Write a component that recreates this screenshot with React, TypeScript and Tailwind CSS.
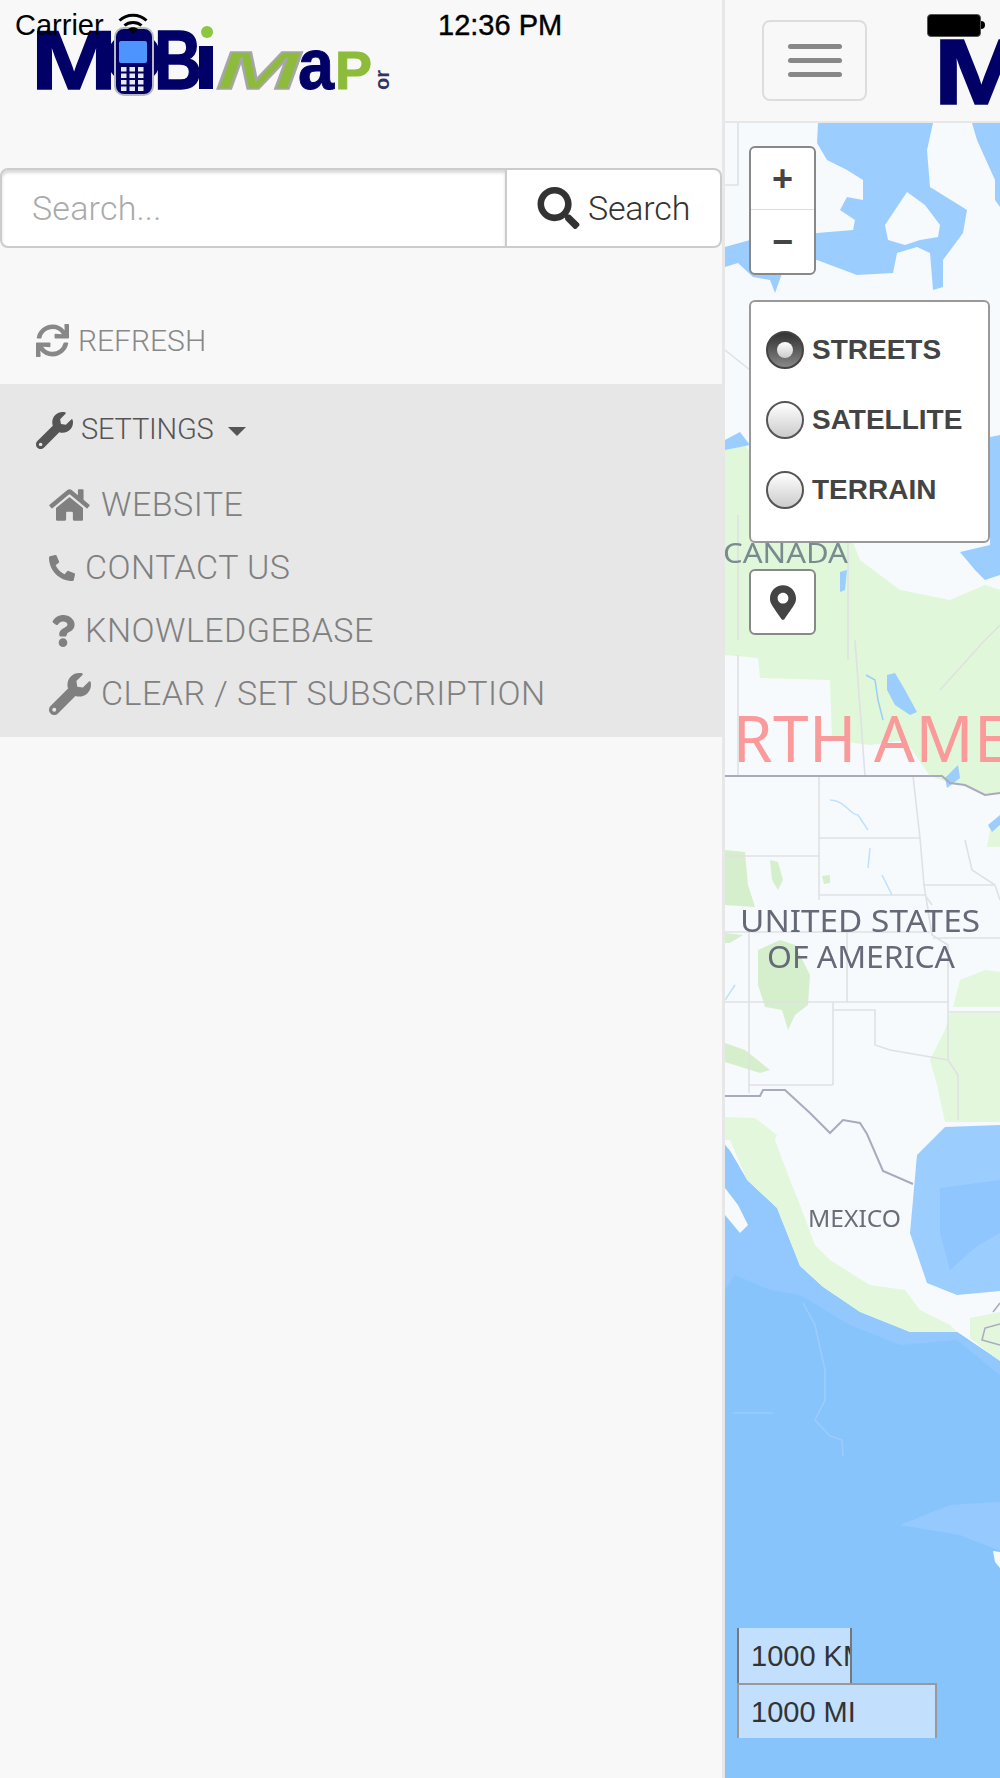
import { FaHome, FaMapMarkerAlt, FaPhoneAlt, FaQuestion, FaSearch, FaSync, FaWrench } from "react-icons/fa";

function Logo({ className }: { className: string }) {
    return (
        <svg viewBox="0 0 358 68" className={`overflow-visible ${className}`} style={{ fontFamily: "'Liberation Sans', sans-serif" }}>
            <text x="-5" y="61" fontSize="84" fontWeight="700" fill="#000066" stroke="#000066" strokeWidth="1.5" textLength="86" lengthAdjust="spacingAndGlyphs">M</text>
            <circle cx="98" cy="30" r="27" fill="#000066" />
            <rect x="79" y="0" width="38" height="67" rx="9" fill="#000066" stroke="#b9b9c4" strokeWidth="2" />
            <rect x="83" y="13" width="28" height="22" rx="2" fill="#4d94ff" />
            {[0, 1, 2, 3].map((row) =>
                [0, 1, 2].map((col) => (
                    <rect key={`${row}-${col}`} x={85 + col * 8.5} y={39 + row * 6.5} width="5.5" height="4.5" fill="#e8e8ef" />
                ))
            )}
            <text x="118" y="61" fontSize="84" fontWeight="700" fill="#000066" stroke="#000066" strokeWidth="1.5" textLength="48" lengthAdjust="spacingAndGlyphs">B</text>
            <rect x="163" y="18" width="14" height="43" fill="#000066" />
            <circle cx="171" cy="4" r="6" fill="#8dc63f" />
            <text x="180" y="61" fontSize="54" fontWeight="700" fontStyle="italic" fill="#8dbb3a" stroke="#a6a6a6" strokeWidth="1.5" textLength="84" lengthAdjust="spacingAndGlyphs">M</text>
            <text x="262" y="61" fontSize="72" fontWeight="700" fill="#000066" stroke="#000066" strokeWidth="1" textLength="36" lengthAdjust="spacingAndGlyphs">a</text>
            <text x="299" y="61" fontSize="54" fontWeight="700" fill="#8dbb3a" stroke="#8dbb3a" strokeWidth="1" textLength="37" lengthAdjust="spacingAndGlyphs">P</text>
            <text x="0" y="0" fontSize="20" fontWeight="700" fill="#333366" transform="translate(353 62) rotate(-90)">or</text>
        </svg>
    );
}

function StatusBar() {
    return (
        <div className="absolute top-0 left-0 w-full h-[52px] flex items-center justify-between pl-[15px] pr-[15px] text-[29px] text-black font-['Liberation_Sans',sans-serif]">
            <div className="flex items-center gap-[14px]">
                <span>Carrier</span>
                <svg viewBox="0 0 30 22" className="w-[30px] h-[22px] -mt-[5px]" fill="none" stroke="#000" strokeWidth="3">
                    <path d="M1.5 7.5 C9 0.5 21 0.5 28.5 7.5" />
                    <path d="M6.5 12.5 C11 8.5 19 8.5 23.5 12.5" />
                    <path d="M15 21 L10 16 C13 13.5 17 13.5 20 16 Z" fill="#000" stroke="none" />
                </svg>
            </div>
            <span className="absolute left-[438px] [-webkit-text-stroke:0.4px_#000]">12:36 PM</span>
            <div className="flex items-center -mt-[2px]">
                <div className="w-[54px] h-[23px] bg-black rounded-[4px] border border-[#555]" />
                <div className="w-[4px] h-[8px] bg-black rounded-r-full" />
            </div>
        </div>
    );
}

function Sidebar() {
    const rows = [
        { label: "WEBSITE", icon: <FaHome className="w-[41px] h-[36px]" />, iconBox: "w-[52px] pl-0" },
        { label: "CONTACT US", icon: <FaPhoneAlt className="w-[26px] h-[26px]" />, iconBox: "w-[36px] pl-0" },
        { label: "KNOWLEDGEBASE", icon: <FaQuestion className="w-[24px] h-[32px]" />, iconBox: "w-[36px] pl-[2px]" },
        { label: "CLEAR / SET SUBSCRIPTION", icon: <FaWrench className="w-[42px] h-[42px]" />, iconBox: "w-[52px] pl-0" },
    ];

    return (
        <aside className="w-[725px] shrink-0 h-full bg-[#f8f8f8] border-r-[3px] border-[#e7e7e7]">
            <div className="pt-[28px] pl-[36px] h-[168px]">
                <Logo className="w-[358px] h-[68px]" />
            </div>

            <div className="flex h-[80px] w-[722px] text-[34px] font-light">
                <div className="w-[507px] bg-white border-2 border-[#ccc] rounded-l-[8px] shadow-[inset_0_3px_3px_rgba(0,0,0,0.15)] flex items-center pl-[30px] text-[#aaa] tracking-[0.2px]">
                    Search...
                </div>
                <div className="flex-1 bg-white border-2 border-l-0 border-[#ccc] rounded-r-[8px] flex items-center pl-[30px] gap-[8px] text-[#333] tracking-[-0.2px]">
                    <FaSearch className="w-[43px] h-[42px]" />
                    Search
                </div>
            </div>

            <div className="h-[136px] flex items-start pt-[75px] pl-[36px] text-[#888]">
                <FaSync className="w-[33px] h-[33px] mt-[1px]" />
                <span className="ml-[9px] text-[30px] leading-[35px] font-light">REFRESH</span>
            </div>

            <div className="bg-[#e7e7e7] h-[353px] pt-[23px]">
                <div className="flex items-center h-[46px] pl-[36px] text-[#555]">
                    <FaWrench className="w-[37px] h-[37px]" />
                    <span className="ml-[8px] text-[29px] font-light tracking-[-0.2px]">SETTINGS</span>
                    <span className="ml-[14px] mt-[3px] w-0 h-0 border-x-[9px] border-x-transparent border-t-[9px] border-t-[#555]" />
                </div>
                <div className="mt-[20px] pl-[49px] text-[#808080]">
                    {rows.map((row) => (
                        <div key={row.label} className="flex items-center h-[63px] text-[34px] font-light tracking-[0.45px]">
                            <span className={`${row.iconBox} shrink-0 flex items-center`}>{row.icon}</span>
                            {row.label}
                        </div>
                    ))}
                </div>
            </div>
        </aside>
    );
}

function MapArt() {
    return (
        <svg viewBox="725 123 275 1655" className="block w-full h-full blur-[0.7px]" style={{ fontFamily: "'Noto Sans', sans-serif" }}>
            <rect x="725" y="123" width="275" height="1655" fill="#f6fafd" />

            {/* green land */}
            <path fill="#e0f7d9" d="M725 447 L745 445 L770 480 L800 520 L850 535 L860 560 L900 590 L950 600 L985 585 L1000 590 L1000 793 L985 795 L965 785 L950 783 L930 776 L725 776 Z" />
            <path fill="#f6fafd" d="M725 655 L758 658 L760 678 L830 680 L832 740 L870 745 L905 740 L930 776 L725 776 Z" />
            <g fill="#e3f7dd">
                <path d="M987 847 L990 830 L1000 827 L1000 847 Z" />
                <path d="M953 1007 L960 980 L985 970 L1000 972 L1000 1007 Z" />
                <path d="M930 1060 L945 1030 L950 1013 L1000 1013 L1000 1122 L945 1122 L937 1085 Z" />
                <path d="M725 1117 L755 1118 L777 1135 L775 1140 L725 1140 Z" />
            </g>
            <g fill="#d5efcd">
                <path d="M725 850 L745 852 L748 885 L755 907 L725 905 Z" />
                <path d="M770 860 L778 862 L783 880 L778 890 L772 880 Z" />
                <path d="M822 876 L830 875 L830 883 L824 884 Z" />
                <path d="M725 933 L743 935 L730 943 L725 943 Z" />
                <path d="M758 950 L780 940 L795 945 L810 975 L808 1005 L795 1015 L788 1030 L782 1010 L765 1007 L758 985 Z" />
                <path d="M725 1043 L745 1050 L770 1070 L760 1073 L725 1062 Z" />
            </g>

            {/* water, north */}
            <g fill="#9ccdff">
                <path d="M818 123 L817 143 L827 160 L847 170 L863 180 L863 200 L847 197 L840 210 L855 220 L853 230 L817 233 L750 240 L725 247 L725 267 L738 263 L753 277 L770 280 L775 293 L785 265 L817 260 L857 275 L893 273 L897 253 L917 247 L930 253 L933 290 L943 287 L943 260 L963 233 L967 210 L930 187 L927 150 L933 123 Z" />
                <path d="M972 123 L977 140 L995 180 L995 200 L1000 207 L1000 123 Z" />
                <path d="M990 437 L1000 435 L1000 575 L985 580 L975 570 L960 552 L990 545 Z" />
                <path d="M887 675 L895 673 L905 690 L917 712 L910 715 L895 705 L887 690 Z" />
                <path d="M840 572 L847 570 L845 590 L840 592 Z" />
                <path d="M725 440 L740 432 L750 445 L725 450 Z" />
                <path d="M945 778 L958 765 L960 778 L947 788 Z" />
                <path d="M988 825 L1000 815 L1000 825 L992 832 Z" />
            </g>
            <path fill="#f6fafd" d="M885 225 L907 192 L925 205 L940 225 L938 237 L920 240 L905 245 L888 240 Z" />

            {/* gulf and pacific */}
            <path fill="#9ccdff" d="M945 1127 L1000 1125 L1000 1291 L957 1295 L927 1283 L910 1233 L917 1155 Z" />
            <path fill="#8ec6fd" d="M940 1188 L1000 1180 L1000 1233 L977 1246 L950 1270 L940 1233 Z" />
            <path fill="#88c4fc" d="M725 1778 L725 1145 L730 1151 L747 1180 L777 1208 L800 1266 L823 1287 L860 1312 L910 1332 L957 1332 L1000 1361 L1000 1778 Z" />
            <path fill="#92c8fe" d="M725 1145 L730 1151 L747 1180 L777 1208 L800 1266 L823 1287 L860 1312 L910 1332 L957 1332 L1000 1361 L1000 1375 L957 1340 L900 1345 L850 1325 L800 1295 L770 1290 L735 1275 L725 1290 Z" />
            <path fill="#96caff" d="M900 1525 L950 1505 L1000 1502 L1000 1551 L960 1535 Z" />
            <path fill="#f6fafd" d="M725 1188 L738 1205 L748 1225 L740 1233 L725 1215 Z M993 1551 L1000 1552 L1000 1568 L995 1562 Z" />

            {/* mexico */}
            <path fill="#e3f7dd" d="M730 1140 L775 1140 L790 1180 L800 1205 L815 1245 L830 1260 L870 1285 L905 1290 L920 1310 L950 1325 L957 1332 L910 1332 L860 1312 L823 1287 L800 1266 L777 1208 L747 1180 Z" />
            <path fill="#e3f7dd" d="M970 1318 L1000 1312 L1000 1361 L985 1350 L970 1338 Z" />

            {/* state lines */}
            <g fill="none" stroke="#dfe1e3" strokeWidth="1.6">
                <path d="M819 776 V900 M819 838 H920 M913 776 L920 838 L924 885 L932 935 L948 945 V1060 M819 895 H925 L932 905" />
                <path d="M725 856 H819 M725 932 H930 M749 932 V1093 M847 932 V1002 M725 1002 H948 M833 1002 V1085 M749 1085 H833" />
                <path d="M923 885 H995 M933 938 H1000 M833 1010 H875 V1045 L890 1050 L948 1060 L958 1075 V1120 M948 1012 H1000" />
                <path d="M995 885 L1000 900 M965 840 L972 870 L995 885" />
                <path d="M738 123 V185 H725 M738 655 V776 M855 640 L865 776 M940 690 L985 640 L1000 625" />
                <path d="M738 515 V640 M848 540 V660" />
                <path d="M725 350 L750 370" />
            </g>

            {/* borders */}
            <g fill="none" stroke="#aaaabc" strokeWidth="2">
                <path d="M725 776 H942 L950 783 L965 785 L985 795 L1000 793" />
                <path d="M725 1096 H760 L763 1090 L785 1090 L810 1113 L830 1133 L843 1120 L860 1123 L867 1134 L883 1171 L913 1184" />
                <path d="M1000 1324 L985 1328 L982 1340 L1000 1345 M993 1312 L1000 1303" strokeWidth="1.5" />
            </g>

            {/* rivers and lakes, small */}
            <g fill="none" stroke="#bfe0ff" strokeWidth="1.5">
                <path d="M830 800 C845 800 850 815 858 815 L868 830" />
                <path d="M870 848 L868 868 M882 875 L892 895" />
                <path d="M735 985 L725 1000" />
                <path d="M866 675 L875 680 L878 700 L883 720" stroke="#9ccdff" />
                <path d="M803 1303 L815 1325 L825 1370 L825 1400 L815 1420 L830 1436 L842 1440 L843 1456" stroke="#9dccfc" />
                <path d="M733 1413 L773 1413" stroke="#9dccfc" />
            </g>

            <text x="623" y="762" fontSize="64" letterSpacing="0.5" fill="#fb9a9a">NO<tspan dx="10">RTH AMERICA</tspan></text>
            <text x="723" y="563" fontSize="28" fill="#7a8a8f" textLength="125" lengthAdjust="spacingAndGlyphs">CANADA</text>
            <text x="740" y="932" fontSize="31" fill="#666a78" textLength="240" lengthAdjust="spacingAndGlyphs">UNITED STATES</text>
            <text x="767" y="968" fontSize="31" fill="#666a78" textLength="188" lengthAdjust="spacingAndGlyphs">OF AMERICA</text>
            <text x="808" y="1227" fontSize="24" fill="#6a6e78" textLength="93" lengthAdjust="spacingAndGlyphs">MEXICO</text>
        </svg>
    );
}

function Radio({ label, checked }: { label: string; checked?: boolean }) {
    return (
        <div className="flex items-center h-[70px] gap-[8px]">
            {checked ? (
                <span className="w-[38px] h-[38px] rounded-full bg-linear-to-b from-[#333] to-[#888] border-2 border-[#444] flex items-center justify-center">
                    <span className="w-[16px] h-[16px] rounded-full bg-linear-to-b from-white to-[#ccc]" />
                </span>
            ) : (
                <span className="w-[38px] h-[38px] rounded-full bg-linear-to-b from-white to-[#ccc] border-2 border-[#555]" />
            )}
            <span className="text-[28px] font-bold text-[#444]">{label}</span>
        </div>
    );
}

function MapPanel() {
    return (
        <div className="relative flex-1 overflow-hidden bg-[#f6fafd] font-['Liberation_Sans',sans-serif]">
            <MapArt />

            <div className="absolute left-[24px] top-[23px] w-[67px] h-[129px] bg-white border-2 border-[#888] rounded-[6px] flex flex-col text-[#444]">
                <div className="h-[62px] border-b border-[#ddd] flex items-center justify-center text-[36px] font-bold">+</div>
                <div className="flex-1 flex items-center justify-center text-[36px] font-bold">−</div>
            </div>

            <div className="absolute left-[24px] top-[177px] w-[241px] h-[243px] bg-white border-2 border-[#999] rounded-[6px] pl-[15px] pt-[13px]">
                <Radio label="STREETS" checked />
                <Radio label="SATELLITE" />
                <Radio label="TERRAIN" />
            </div>

            <div className="absolute left-[24px] top-[446px] w-[67px] h-[66px] bg-white border-2 border-[#888] rounded-[6px] flex items-center justify-center text-[#444]">
                <FaMapMarkerAlt className="w-[26px] h-[37px]" />
            </div>

            <div className="absolute left-[12px] bottom-[40px] text-[29px] text-[#333]">
                <div className="w-[115px] h-[55px] bg-[#c2e0fd] border-x-2 border-[#777] pl-[12px] pt-[3px] flex items-center overflow-hidden whitespace-nowrap">1000 KM</div>
                <div className="w-[200px] h-[55px] bg-[#c2e0fd] border-x-2 border-t-2 border-[#999] pl-[12px] pt-[3px] flex items-center">1000 MI</div>
            </div>
        </div>
    );
}

export default function App() {
    return (
        <div className="relative flex w-[1000px] h-[1778px] overflow-hidden bg-[#f8f8f8] font-['Roboto',sans-serif]">
            <Sidebar />
            <div className="flex-1 min-w-0 flex flex-col h-full">
                <div className="h-[123px] shrink-0 bg-[#f8f8f8] border-b-2 border-[#e7e7e7] flex items-start pt-[20px] pl-[37px] overflow-hidden">
                    <div className="w-[105px] h-[81px] shrink-0 border-2 border-[#ddd] rounded-[8px] flex flex-col items-center justify-center gap-[9px]">
                        <span className="w-[54px] h-[5px] rounded-full bg-[#888]" />
                        <span className="w-[54px] h-[5px] rounded-full bg-[#888]" />
                        <span className="w-[54px] h-[5px] rounded-full bg-[#888]" />
                    </div>
                    <Logo className="w-[398px] h-[76px] shrink-0 ml-[72px] mt-[16px]" />
                </div>
                <MapPanel />
            </div>
            <StatusBar />
        </div>
    );
}
